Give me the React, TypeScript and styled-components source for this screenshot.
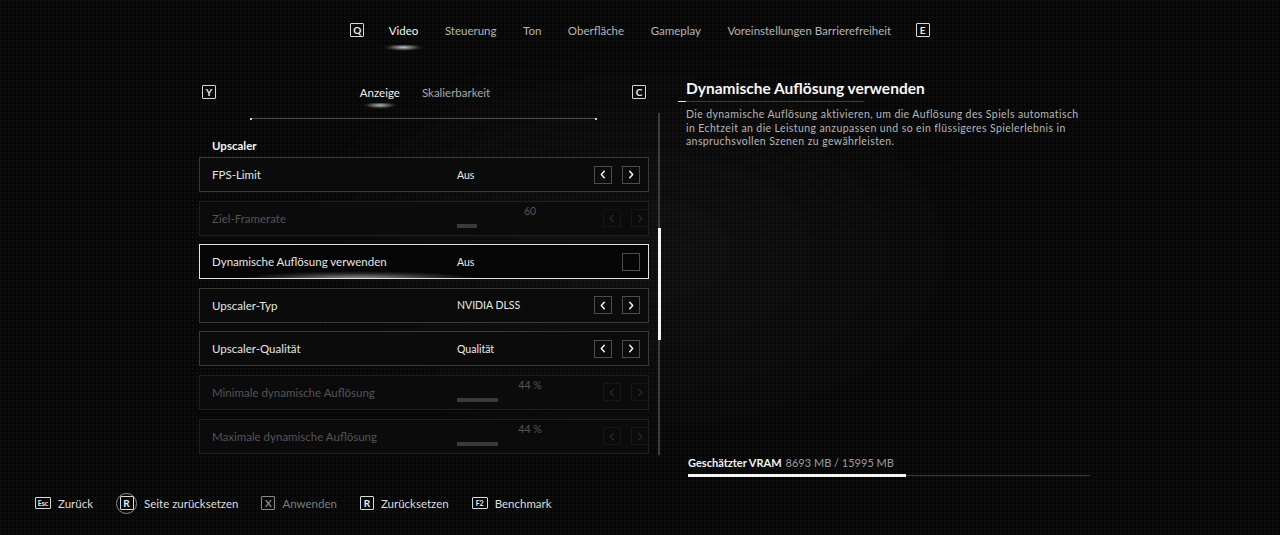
import styled, { createGlobalStyle } from "styled-components";

const GlobalStyle = createGlobalStyle`
  html, body {
    margin: 0;
    padding: 0;
    background: #070708;
  }
  body {
    font-family: Lato, "Open Sans", sans-serif;
    color: #e4e4e4;
    -webkit-font-smoothing: antialiased;
  }
`;

const Page = styled.div`
  width: 1280px;
  height: 535px;
  display: flex;
  flex-direction: column;
  overflow: hidden;
  background:
    radial-gradient(ellipse 520px 300px at 640px 250px, rgba(255, 255, 255, 0.035), transparent 70%),
    radial-gradient(circle at 1px 1px, rgba(255, 255, 255, 0.03) 1px, transparent 1.2px) 0 0 / 4px 4px,
    #070708;
`;

/* ---------- key caps ---------- */

const Key = styled.span<{ $wide?: boolean; $dim?: boolean }>`
  display: inline-flex;
  align-items: center;
  justify-content: center;
  box-sizing: border-box;
  width: ${({ $wide }) => ($wide ? "16px" : "14px")};
  height: ${({ $wide }) => ($wide ? "12px" : "14px")};
  border: 1px solid ${({ $dim }) => ($dim ? "#8a8a8a" : "#d8d8d8")};
  border-radius: 1px;
  font-size: ${({ $wide }) => ($wide ? "7px" : "10px")};
  font-weight: 700;
  line-height: 1;
  color: ${({ $dim }) => ($dim ? "#8a8a8a" : "#ececec")};
`;

const RoundKey = styled.span`
  display: inline-flex;
  align-items: center;
  justify-content: center;
  width: 21px;
  height: 21px;
  border-radius: 50%;
  border: 1px solid #8c8c8c;
  box-sizing: border-box;
`;

/* ---------- top navigation ---------- */

const TopNav = styled.nav`
  height: 60px;
  display: flex;
  align-items: center;
  justify-content: center;
  gap: 22.5px;
  flex-shrink: 0;
`;

const NavTab = styled.span<{ $active?: boolean }>`
  position: relative;
  font-size: 11.5px;
  color: ${({ $active }) => ($active ? "#f4f4f4" : "#b4b4b4")};
  padding: 0 2px;

  ${({ $active }) =>
    $active &&
    `
    &::after {
      content: "";
      position: absolute;
      left: -10px;
      right: -10px;
      top: 21px;
      height: 8px;
      background: radial-gradient(ellipse 50% 60% at 50% 30%, rgba(255,255,255,0.75), rgba(255,255,255,0.08) 60%, transparent 80%);
    }
  `}
`;

/* ---------- main area ---------- */

const Main = styled.div`
  flex: 1;
  display: flex;
  padding-left: 199px;
  gap: 16px;
  min-height: 0;
`;

const LeftColumn = styled.section`
  width: 463px;
  display: flex;
  flex-direction: column;
`;

const SubTabBar = styled.div`
  margin-top: 20px;
  height: 24px;
  display: flex;
  align-items: center;
  justify-content: space-between;
  padding: 0 16px 0 3px;
`;

const SubTabs = styled.div`
  display: flex;
  gap: 22px;
  margin-left: 2px;
`;

const SubTab = styled.span<{ $active?: boolean }>`
  position: relative;
  font-size: 11.5px;
  color: ${({ $active }) => ($active ? "#f0f0f0" : "#a8a8a8")};

  ${({ $active }) =>
    $active &&
    `
    &::after {
      content: "";
      position: absolute;
      left: -4px;
      right: -4px;
      top: 17px;
      height: 9px;
      background: radial-gradient(ellipse 45% 50% at 50% 25%, rgba(255,255,255,0.7), rgba(255,255,255,0.06) 65%, transparent 85%);
    }
  `}
`;

const ListArea = styled.div`
  margin-top: 9px;
  height: 342px;
  display: flex;
  gap: 9px;
`;

const List = styled.div`
  width: 450px;
  display: flex;
  flex-direction: column;
`;

const Divider = styled.div`
  position: relative;
  margin: 5px 52px 0 51px;
  height: 1px;
  background: #4e4e4e;

  &::before,
  &::after {
    content: "";
    position: absolute;
    top: -0.5px;
    width: 2px;
    height: 2px;
    background: #d0d0d0;
  }
  &::before {
    left: 0;
  }
  &::after {
    right: 0;
  }
`;

const SectionTitle = styled.h3`
  margin: 20px 0 4px 13px;
  font-size: 11.5px;
  font-weight: 700;
  line-height: 14px;
  color: #f2f2f2;
`;

const Rows = styled.div`
  display: flex;
  flex-direction: column;
  gap: 8.6px;
`;

const Row = styled.div<{ $selected?: boolean; $disabled?: boolean }>`
  position: relative;
  height: 35px;
  box-sizing: border-box;
  display: grid;
  grid-template-columns: 245px 1fr auto;
  align-items: center;
  padding: 0 8px 0 12px;
  border: 1px solid
    ${({ $selected, $disabled }) =>
      $selected ? "#e2e2e2" : $disabled ? "#1f1f20" : "#3a3a3b"};
  background: ${({ $selected }) => ($selected ? "#050505" : "#0b0b0c")};
  overflow: hidden;

  ${({ $selected }) =>
    $selected &&
    `
    &::after {
      content: "";
      position: absolute;
      left: 10px;
      width: 300px;
      bottom: -9px;
      height: 20px;
      background: radial-gradient(ellipse 50% 50% at 50% 60%, rgba(255,255,255,0.6), rgba(255,255,255,0.14) 55%, transparent 80%);
      pointer-events: none;
    }
  `}
`;

const RowLabel = styled.span<{ $disabled?: boolean }>`
  font-size: 11.5px;
  color: ${({ $disabled }) => ($disabled ? "#545456" : "#e6e6e6")};
`;

const RowValue = styled.span`
  font-size: 10.5px;
  color: #ececec;
`;

const Slider = styled.div`
  width: 146px;
  display: flex;
  flex-direction: column;
  margin-top: -4px;
`;

const SliderValue = styled.span`
  text-align: center;
  font-size: 10.5px;
  color: #555557;
  line-height: 12px;
`;

const SliderFill = styled.div`
  margin-top: 7px;
  height: 4px;
  background: #3a3a3b;
`;

const Controls = styled.div`
  display: flex;
  gap: 10px;
`;

const ArrowButton = styled.span<{ $disabled?: boolean }>`
  width: 18px;
  height: 18px;
  box-sizing: border-box;
  display: flex;
  align-items: center;
  justify-content: center;
  border: 1px solid ${({ $disabled }) => ($disabled ? "#161617" : "#4d4d4e")};
  color: ${({ $disabled }) => ($disabled ? "#262628" : "#f2f2f2")};
`;

const Checkbox = styled.span`
  width: 18px;
  height: 18px;
  box-sizing: border-box;
  border: 1px solid #4d4d4e;
  margin-left: 28px;
`;

const ScrollTrack = styled.div`
  position: relative;
  width: 2px;
  background: #3c3c3d;
`;

const ScrollThumb = styled.div`
  position: absolute;
  left: 0;
  width: 3px;
  top: 115px;
  height: 112px;
  background: #f4f4f4;
`;

/* ---------- detail panel ---------- */

const DetailPanel = styled.aside`
  width: 414px;
  display: flex;
  flex-direction: column;
  padding-bottom: 6px;
`;

const DetailTitle = styled.h2`
  margin: 19px 0 0;
  padding: 0 8px 4px;
  font-size: 15.5px;
  font-weight: 700;
  line-height: 18px;
  color: #f6f6f6;
  width: 170px;
  white-space: nowrap;
  border-bottom: 1px solid #3c3c3d;
  position: relative;

  &::after {
    content: "";
    position: absolute;
    left: 0;
    bottom: -1px;
    width: 8px;
    height: 1px;
    background: #e8e8e8;
  }
`;

const DetailText = styled.p`
  margin: 6px 0 0 8px;
  width: 400px;
  font-size: 10.5px;
  letter-spacing: 0.4px;
  line-height: 13.5px;
  color: #b6b6b6;
`;

const Vram = styled.div`
  margin-top: auto;
  padding-left: 10px;
  display: flex;
  flex-direction: column;
`;

const VramLabel = styled.div`
  font-size: 11px;
  color: #9c9c9c;

  b {
    color: #f2f2f2;
    font-weight: 700;
    margin-right: 4px;
  }
`;

const VramBar = styled.div`
  margin-top: 5px;
  width: 402px;
  height: 3px;
  display: flex;
  align-items: center;
  background: linear-gradient(#3a3a3b, #3a3a3b) 0 50% / 100% 1px no-repeat;
`;

const VramFill = styled.div`
  height: 3px;
  background: #f4f4f4;
`;

/* ---------- footer ---------- */

const Footer = styled.footer`
  height: 40px;
  margin-bottom: 12px;
  padding-left: 35px;
  display: flex;
  align-items: center;
  gap: 23px;
  flex-shrink: 0;
`;

const Hint = styled.span<{ $dim?: boolean }>`
  display: flex;
  align-items: center;
  gap: 7px;
  font-size: 11.5px;
  color: ${({ $dim }) => ($dim ? "#7e7e7e" : "#dedede")};
`;

const Chevron = ({ dir }: { dir: "left" | "right" }) => (
  <svg width="8" height="9" viewBox="0 0 8 9" fill="none">
    <path
      d={dir === "left" ? "M5.3 1.2 2.3 4.5l3 3.3" : "M2.7 1.2l3 3.3-3 3.3"}
      stroke="currentColor"
      strokeWidth="1.5"
      strokeLinecap="round"
      strokeLinejoin="round"
    />
  </svg>
);

type Setting = {
  label: string;
  kind: "stepper" | "slider" | "toggle";
  value: string;
  fill?: number;
  disabled?: boolean;
  selected?: boolean;
};

const settings: Setting[] = [
  { label: "FPS-Limit", kind: "stepper", value: "Aus" },
  { label: "Ziel-Framerate", kind: "slider", value: "60", fill: 20, disabled: true },
  { label: "Dynamische Auflösung verwenden", kind: "toggle", value: "Aus", selected: true },
  { label: "Upscaler-Typ", kind: "stepper", value: "NVIDIA DLSS" },
  { label: "Upscaler-Qualität", kind: "stepper", value: "Qualität" },
  { label: "Minimale dynamische Auflösung", kind: "slider", value: "44 %", fill: 41, disabled: true },
  { label: "Maximale dynamische Auflösung", kind: "slider", value: "44 %", fill: 41, disabled: true },
];

const navTabs = ["Video", "Steuerung", "Ton", "Oberfläche", "Gameplay", "Voreinstellungen Barrierefreiheit"];

export default function App() {
  return (
    <Page>
      <GlobalStyle />
      <TopNav>
        <Key>Q</Key>
        {navTabs.map((t, i) => (
          <NavTab key={t} $active={i === 0}>
            {t}
          </NavTab>
        ))}
        <Key>E</Key>
      </TopNav>

      <Main>
        <LeftColumn>
          <SubTabBar>
            <Key>Y</Key>
            <SubTabs>
              <SubTab $active>Anzeige</SubTab>
              <SubTab>Skalierbarkeit</SubTab>
            </SubTabs>
            <Key>C</Key>
          </SubTabBar>

          <ListArea>
            <List>
              <Divider />
              <SectionTitle>Upscaler</SectionTitle>
              <Rows>
                {settings.map((s) => (
                  <Row key={s.label} $selected={s.selected} $disabled={s.disabled}>
                    <RowLabel $disabled={s.disabled}>{s.label}</RowLabel>
                    {s.kind === "slider" ? (
                      <Slider>
                        <SliderValue>{s.value}</SliderValue>
                        <SliderFill style={{ width: s.fill }} />
                      </Slider>
                    ) : (
                      <RowValue>{s.value}</RowValue>
                    )}
                    {s.kind === "toggle" ? (
                      <Checkbox />
                    ) : (
                      <Controls>
                        <ArrowButton $disabled={s.disabled}>
                          <Chevron dir="left" />
                        </ArrowButton>
                        <ArrowButton $disabled={s.disabled}>
                          <Chevron dir="right" />
                        </ArrowButton>
                      </Controls>
                    )}
                  </Row>
                ))}
              </Rows>
            </List>
            <ScrollTrack>
              <ScrollThumb />
            </ScrollTrack>
          </ListArea>
        </LeftColumn>

        <DetailPanel>
          <DetailTitle>Dynamische Auflösung verwenden</DetailTitle>
          <DetailText>
            Die dynamische Auflösung aktivieren, um die Auflösung des Spiels automatisch in Echtzeit an die
            Leistung anzupassen und so ein flüssigeres Spielerlebnis in anspruchsvollen Szenen zu
            gewährleisten.
          </DetailText>
          <Vram>
            <VramLabel>
              <b>Geschätzter VRAM</b>8693 MB / 15995 MB
            </VramLabel>
            <VramBar>
              <VramFill style={{ width: `${(8693 / 15995) * 100}%` }} />
            </VramBar>
          </Vram>
        </DetailPanel>
      </Main>

      <Footer>
        <Hint>
          <Key $wide>Esc</Key>Zurück
        </Hint>
        <Hint>
          <RoundKey>
            <Key>R</Key>
          </RoundKey>
          Seite zurücksetzen
        </Hint>
        <Hint $dim>
          <Key $dim>X</Key>Anwenden
        </Hint>
        <Hint>
          <Key>R</Key>Zurücksetzen
        </Hint>
        <Hint>
          <Key $wide>F2</Key>Benchmark
        </Hint>
      </Footer>
    </Page>
  );
}
